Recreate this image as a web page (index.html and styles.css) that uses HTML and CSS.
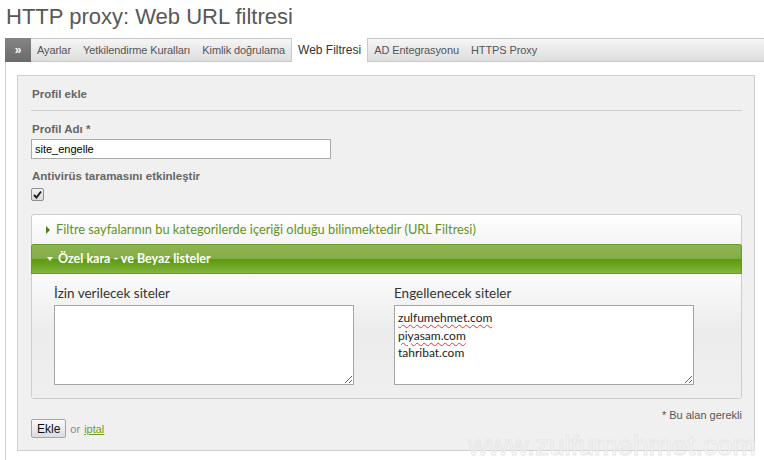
FILE: index.html
```html
<!DOCTYPE html>
<html lang="tr">
<head>
    <meta charset="UTF-8">
    <title>HTTP proxy: Web URL filtresi</title>
    <link rel="stylesheet" href="styles.css">
</head>
<body>
    <h1 class="page-title">HTTP proxy: Web URL filtresi</h1>

    <div class="tabs">
        <a class="tab-toggle" href="javascript:void(0);">&raquo;</a>
        <a class="tab" href="javascript:void(0);">Ayarlar</a>
        <a class="tab" href="javascript:void(0);">Yetkilendirme Kuralları</a>
        <a class="tab" href="javascript:void(0);">Kimlik doğrulama</a>
        <a class="tab active" href="javascript:void(0);">Web Filtresi</a>
        <a class="tab" href="javascript:void(0);">AD Entegrasyonu</a>
        <a class="tab" href="javascript:void(0);">HTTPS Proxy</a>
    </div>

    <div class="content">
        <div class="panel">
            <div class="panel-title">Profil ekle</div>

            <label class="field-label">Profil Adı *</label>
            <input type="text" class="text-input" value="site_engelle">

            <label class="field-label">Antivirüs taramasını etkinleştir</label>
            <span class="checkbox">
                <svg width="9" height="9" viewBox="0 0 9 9"><path d="M1 5 L3.5 7.5 L8 1.5" fill="none" stroke="#222" stroke-width="2"/></svg>
            </span>

            <div class="accordion">
                <div class="acc-head"><span class="arrow-right"></span>Filtre sayfalarının bu kategorilerde içeriği olduğu bilinmektedir (URL Filtresi)</div>
                <div class="acc-head open"><span class="arrow-down"></span>Özel kara - ve Beyaz listeler</div>
                <div class="acc-body">
                    <div class="list-col">
                        <div class="list-label">İzin verilecek siteler</div>
                        <div class="textarea"></div>
                    </div>
                    <div class="list-col">
                        <div class="list-label">Engellenecek siteler</div>
                        <div class="textarea">
                            <div><span class="typo">zulfumehmet.com</span></div>
                            <div><span class="typo">piyasam.com</span></div>
                            <div>tahribat.com</div>
                        </div>
                    </div>
                </div>
            </div>

            <div class="required-note">* Bu alan gerekli</div>
            <div class="actions">
                <button class="btn">Ekle</button>
                <span class="or">or</span>
                <a class="cancel" href="javascript:void(0);">iptal</a>
            </div>
        </div>
    </div>

    <div class="watermark">www.zulfumehmet.com</div>
</body>
</html>
```

FILE: styles.css
```css
body {
    margin: 0;
    font-family: "Liberation Sans", Arial, sans-serif;
    font-size: 11px;
    color: #555;
    overflow: hidden;
}

a {
    text-decoration: none;
}

.page-title {
    margin: 0;
    height: 38px;
    padding: 5px 0 0 6px;
    box-sizing: border-box;
    font-size: 22px;
    font-weight: normal;
    line-height: 24px;
    color: #585858;
}

/* tabs */
.tabs {
    display: flex;
    height: 24px;
    margin-left: 5px;
    border: 1px solid #c9c9c9;
    border-right: none;
    box-sizing: border-box;
    background: linear-gradient(#f6f6f6, #e9e9e9 50%, #dedede);
}

.tab-toggle {
    width: 26px;
    margin: -1px 0 -1px -1px;
    line-height: 24px;
    text-align: center;
    font-size: 12px;
    font-weight: bold;
    color: #fff;
    background: linear-gradient(#858585, #6a6a6a);
}

.tab {
    padding: 0 6px;
    line-height: 22px;
    letter-spacing: -0.1px;
    color: #555;
}

.tab.active {
    margin: -1px 0 -1px 0;
    line-height: 24px;
    font-size: 12px;
    letter-spacing: 0;
    color: #333;
    background: #fff;
    border-left: 1px solid #c9c9c9;
    border-right: 1px solid #c9c9c9;
}

/* content */
.content {
    margin-left: 5px;
    height: 398px;
    padding: 13px 9px 0 11px;
    border-left: 1px solid #cfcfcf;
}

.panel {
    width: 711px;
    padding: 0 12px 12px 13px;
    border: 1px solid #cfcfcf;
    background: #f0f0f0;
}

.panel-title {
    padding: 11px 0 9px 1px;
    line-height: 14px;
    font-size: 11.5px;
    font-weight: bold;
    color: #666;
    border-bottom: 1px solid #cdcdcd;
}

.field-label {
    display: block;
    margin: 11px 0 3px 1px;
    line-height: 14px;
    font-size: 11.5px;
    font-weight: bold;
    color: #666;
}

.text-input {
    display: block;
    width: 300px;
    height: 20px;
    margin: 0;
    padding: 0 3px;
    box-sizing: border-box;
    border: 1px solid #a9a9a9;
    font-family: "Liberation Sans", Arial, sans-serif;
    font-size: 11px;
    color: #000;
    background: #fff;
}

.text-input + .field-label {
    margin-top: 10px;
}

.checkbox {
    display: flex;
    align-items: center;
    justify-content: center;
    width: 11px;
    height: 11px;
    margin: 5px 0 0 0;
    border: 1px solid #8f8f8f;
    border-radius: 2px;
    background: linear-gradient(#f4f4f4, #d9d9d9);
}

/* accordion */
.accordion {
    margin-top: 13px;
    border: 1px solid #cdcdcd;
    border-radius: 3px;
    font-family: Lato, "DejaVu Sans", sans-serif;
}

.acc-head {
    height: 29px;
    padding-left: 14px;
    line-height: 29px;
    font-size: 12.8px;
    color: #5f9321;
    background: linear-gradient(#ffffff, #f4f4f4);
    border-radius: 3px 3px 0 0;
}

.acc-head.open {
    height: 30px;
    margin: 0 -1px;
    padding-left: 15px;
    font-size: 12.5px;
    color: #fff;
    font-weight: bold;
    border: 1px solid #679a28;
    border-bottom-color: #6a9a30;
    border-radius: 3px 3px 0 0;
    background: linear-gradient(#8db552, #84ad47 48%, #5d9a10 52%, #6ea624 75%, #82b541);
    box-sizing: border-box;
    line-height: 27px;
}

.arrow-right {
    display: inline-block;
    width: 0;
    height: 0;
    margin-right: 6px;
    border-top: 4px solid transparent;
    border-bottom: 4px solid transparent;
    border-left: 4px solid #4e7d17;
}

.arrow-down {
    display: inline-block;
    width: 0;
    height: 0;
    margin-right: 5px;
    vertical-align: 2px;
    border-left: 3px solid transparent;
    border-right: 3px solid transparent;
    border-top: 4px solid #fff;
}

.acc-body {
    display: grid;
    grid-template-columns: 300px 300px;
    column-gap: 40px;
    padding: 12px 0 13px 22px;
    background: linear-gradient(#fbfbfb, #ececec 45%, #efefef);
}

.list-label {
    margin: 0 0 5px 0;
    line-height: 14px;
    font-size: 13.5px;
    color: #333;
}

.textarea {
    height: 73px;
    padding: 3px 3px 2px;
    border: 1px solid #a5a5a5;
    background: #fff;
    font-size: 12px;
    line-height: 17.5px;
    color: #222;
    resize: both;
    overflow: auto;
}

.typo {
    text-decoration: underline wavy #e33;
    text-decoration-thickness: 1px;
    text-underline-offset: 2px;
}

/* footer of the form */
.required-note {
    margin-top: 9px;
    height: 11px;
    line-height: 14px;
    text-align: right;
    color: #555;
}

.actions {
    display: flex;
    align-items: center;
    gap: 4px;
}

.btn {
    height: 19px;
    margin: 0;
    padding: 0 5px;
    border: 1px solid #a5a5a5;
    border-radius: 2px;
    background: linear-gradient(#fafafa, #dcdcdc);
    font-family: "Liberation Sans", Arial, sans-serif;
    font-size: 12px;
    color: #111;
}

.or {
    color: #888;
}

.cancel {
    color: #6d9f1e;
    text-decoration: underline;
}

.watermark {
    position: absolute;
    left: 468px;
    top: 433px;
    font-size: 28px;
    line-height: 26px;
    color: rgba(255, 255, 255, 0.4);
    -webkit-text-stroke: 1px #e6e6e6;
    white-space: nowrap;
}
```
